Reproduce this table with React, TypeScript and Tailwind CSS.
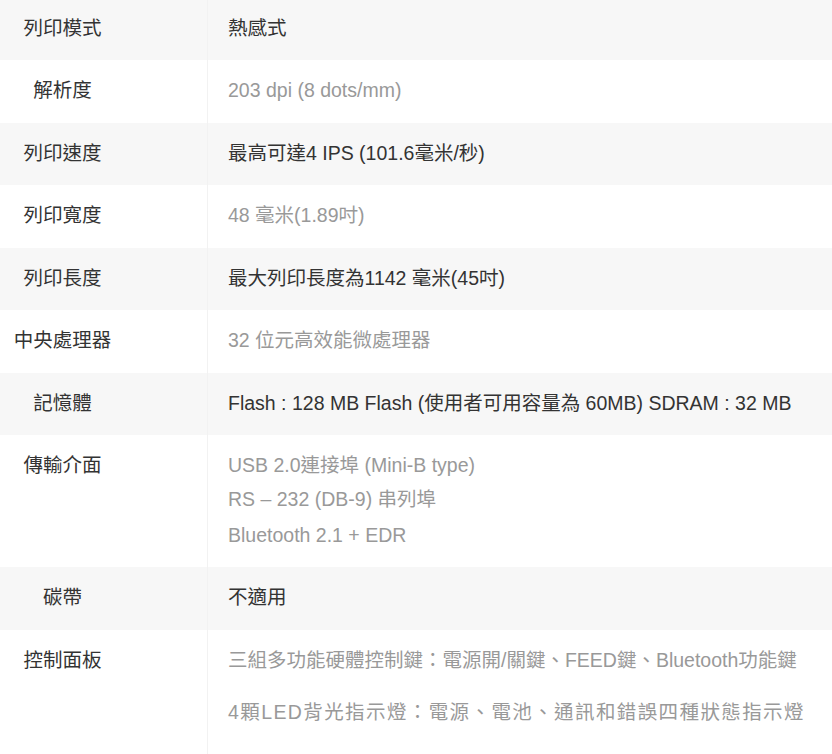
type Spec = {
    label: string;
    lines: string[];
    paragraphs?: boolean;
};

const specs: Spec[] = [
    { label: "列印模式", lines: ["熱感式"] },
    { label: "解析度", lines: ["203 dpi (8 dots/mm)"] },
    { label: "列印速度", lines: ["最高可達4 IPS (101.6毫米/秒)"] },
    { label: "列印寬度", lines: ["48 毫米(1.89吋)"] },
    { label: "列印長度", lines: ["最大列印長度為1142 毫米(45吋)"] },
    { label: "中央處理器", lines: ["32 位元高效能微處理器"] },
    { label: "記憶體", lines: ["Flash : 128 MB Flash (使用者可用容量為 60MB) SDRAM : 32 MB"] },
    { label: "傳輸介面", lines: ["USB 2.0連接埠 (Mini-B type)", "RS – 232 (DB-9) 串列埠", "Bluetooth 2.1 + EDR"] },
    { label: "碳帶", lines: ["不適用"] },
    {
        label: "控制面板",
        lines: ["三組多功能硬體控制鍵：電源開/關鍵、FEED鍵、Bluetooth功能鍵", "4顆LED背光指示燈：電源、電池、通訊和錯誤四種狀態指示燈"],
        paragraphs: true,
    },
];

export default function App() {
    return (
        <div
            className="w-[832px] h-[754px] overflow-hidden bg-white text-[19.5px] leading-[34px]"
            style={{ fontFamily: '"Liberation Sans", Arial, "Noto Sans CJK TC", sans-serif' }}
        >
            <div className="-mt-[2.5px]">
                {specs.map((spec, i) => {
                    const shaded = i % 2 === 0;
                    return (
                        <div key={spec.label} className={`flex ${shaded ? "bg-[#f7f7f7]" : "bg-white"}`}>
                            <div className="w-[208px] shrink-0 border-r border-[#f2f2f2] pr-[82px] pt-[13px] pb-[15.5px] text-center text-[#333]">
                                {spec.label}
                            </div>
                            <div className={`flex-1 pl-5 pt-[13px] pb-[15.5px] ${shaded ? "text-[#333]" : "text-[#999]"}`}>
                                {spec.paragraphs ? (
                                    <div className="flex flex-col gap-[18px] pb-[18px]">
                                        <p>{spec.lines[0]}</p>
                                        <p className="tracking-[1.4px]">{spec.lines[1]}</p>
                                    </div>
                                ) : (
                                    spec.lines.map((line, j) => (
                                        <div key={line} className={j === 2 ? "pt-[1.5px]" : ""}>
                                            {line}
                                        </div>
                                    ))
                                )}
                            </div>
                        </div>
                    );
                })}
            </div>
        </div>
    );
}
